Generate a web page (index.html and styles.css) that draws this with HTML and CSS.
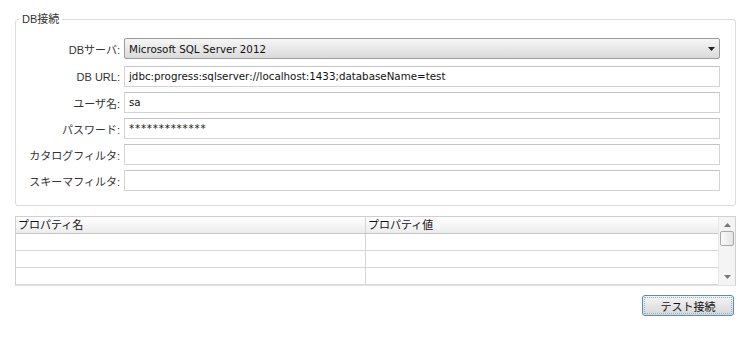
FILE: index.html
```html
<!DOCTYPE html>
<html lang="ja">
<head>
<meta charset="UTF-8">
<title>DB接続</title>
<link rel="stylesheet" href="styles.css">
</head>
<body>
<div class="panel">
    <fieldset class="db-box">
        <legend>DB接続</legend>
        <div class="form-grid">
            <label class="first">DBサーバ:</label>
            <div class="select first">
                <span>Microsoft SQL Server 2012</span>
                <svg width="7" height="4" viewBox="0 0 7 4"><path d="M0 0h7L3.5 4z" fill="#222"/></svg>
            </div>
            <label>DB URL:</label>
            <div class="field">jdbc:progress:sqlserver://localhost:1433;databaseName=test</div>
            <label>ユーザ名:</label>
            <div class="field">sa</div>
            <label>パスワード:</label>
            <div class="field pass">*************</div>
            <label>カタログフィルタ:</label>
            <div class="field"></div>
            <label>スキーマフィルタ:</label>
            <div class="field"></div>
        </div>
    </fieldset>

    <div class="prop-table">
        <div class="table-body">
            <div class="row head">
                <div class="cell">プロパティ名</div>
                <div class="cell">プロパティ値</div>
            </div>
            <div class="row"><div class="cell"></div><div class="cell"></div></div>
            <div class="row"><div class="cell"></div><div class="cell"></div></div>
            <div class="row"><div class="cell"></div><div class="cell"></div></div>
        </div>
        <div class="scrollbar">
            <svg width="7" height="4" viewBox="0 0 7 4"><path d="M3.5 0L7 4H0z" fill="#777"/></svg>
            <div class="thumb"></div>
            <div class="track"></div>
            <svg width="7" height="4" viewBox="0 0 7 4"><path d="M0 0h7L3.5 4z" fill="#777"/></svg>
        </div>
    </div>

    <div class="actions">
        <button class="test-button">テスト接続</button>
    </div>
</div>
</body>
</html>
```

FILE: styles.css
```css
body {
    margin: 0;
    background-color: #ffffff;
    font-family: "Liberation Sans", "Noto Sans CJK JP", sans-serif;
    font-size: 11px;
    color: #1a1a1a;
}
.panel {
    padding: 13px 14px 0 15px;
    width: 721px;
}
.db-box {
    margin: 0;
    padding: 12px 15px 14px 4px;
    border: 1px solid #dcdcdc;
    border-radius: 3px;
}
.db-box legend {
    margin-left: -1px;
    padding: 0 3px;
    line-height: 13px;
    color: #333;
}
.form-grid {
    display: grid;
    grid-template-columns: 100px 1fr;
    column-gap: 4px;
    row-gap: 5px;
    align-items: center;
}
.form-grid label {
    text-align: right;
    color: #333;
    white-space: nowrap;
}
.form-grid .first {
    margin-bottom: 2px;
}
.select {
    display: flex;
    align-items: center;
    justify-content: space-between;
    height: 19px;
    padding: 0 4px 0 4px;
    border: 1px solid #9c9c9c;
    border-radius: 2px;
    background: linear-gradient(#f6f6f6, #dadada);
    font-family: "DejaVu Sans", "Noto Sans CJK JP", sans-serif;
    font-size: 10.3px;
    color: #111;
}
.field {
    height: 19px;
    line-height: 19px;
    padding: 0 4px;
    border: 1px solid #d4d4d4;
    border-top-color: #c4c4c4;
    background-color: #ffffff;
    font-family: "DejaVu Sans", "Noto Sans CJK JP", sans-serif;
    font-size: 10.3px;
    color: #111;
    white-space: nowrap;
    overflow: hidden;
}
.field.pass {
    letter-spacing: 0.8px;
}
.prop-table {
    display: flex;
    margin-top: 10px;
    height: 68px;
    border: 1px solid #d0d0d0;
    border-bottom-color: #e2e2e2;
    overflow: hidden;
}
.table-body {
    flex: 1;
}
.row {
    display: grid;
    grid-template-columns: 350px 1fr;
    height: 16px;
    border-bottom: 1px solid #d6d6d6;
}
.row.head {
    background: linear-gradient(#ffffff, #ececec);
    border-bottom-color: #c6c6c6;
}
.cell {
    line-height: 16px;
    padding-left: 2px;
    border-right: 1px solid #d6d6d6;
    color: #111;
}
.cell:last-child {
    border-right: none;
}
.scrollbar {
    width: 16px;
    display: flex;
    flex-direction: column;
    align-items: center;
    background-color: #f4f4f4;
    border-left: 1px solid #e8e8e8;
}
.scrollbar svg {
    margin: 6px 0 4px;
}
.scrollbar svg:last-child {
    margin: 4px 0 6px;
}
.thumb {
    width: 12px;
    height: 13px;
    border: 1px solid #a8a8a8;
    border-radius: 2px;
    background: linear-gradient(90deg, #fafafa, #e4e4e4);
}
.track {
    flex: 1;
}
.actions {
    display: flex;
    justify-content: flex-end;
    margin-top: 9px;
    padding-right: 2px;
}
.test-button {
    width: 92px;
    height: 21px;
    padding: 0;
    border: 1px solid #5b8fb0;
    border-radius: 3px;
    outline: 1px dotted #7fb3cc;
    outline-offset: -3px;
    background: linear-gradient(#f4f4f4, #d8d8d8);
    font-family: "Noto Sans CJK JP", sans-serif;
    font-size: 11px;
    color: #111;
}
```
